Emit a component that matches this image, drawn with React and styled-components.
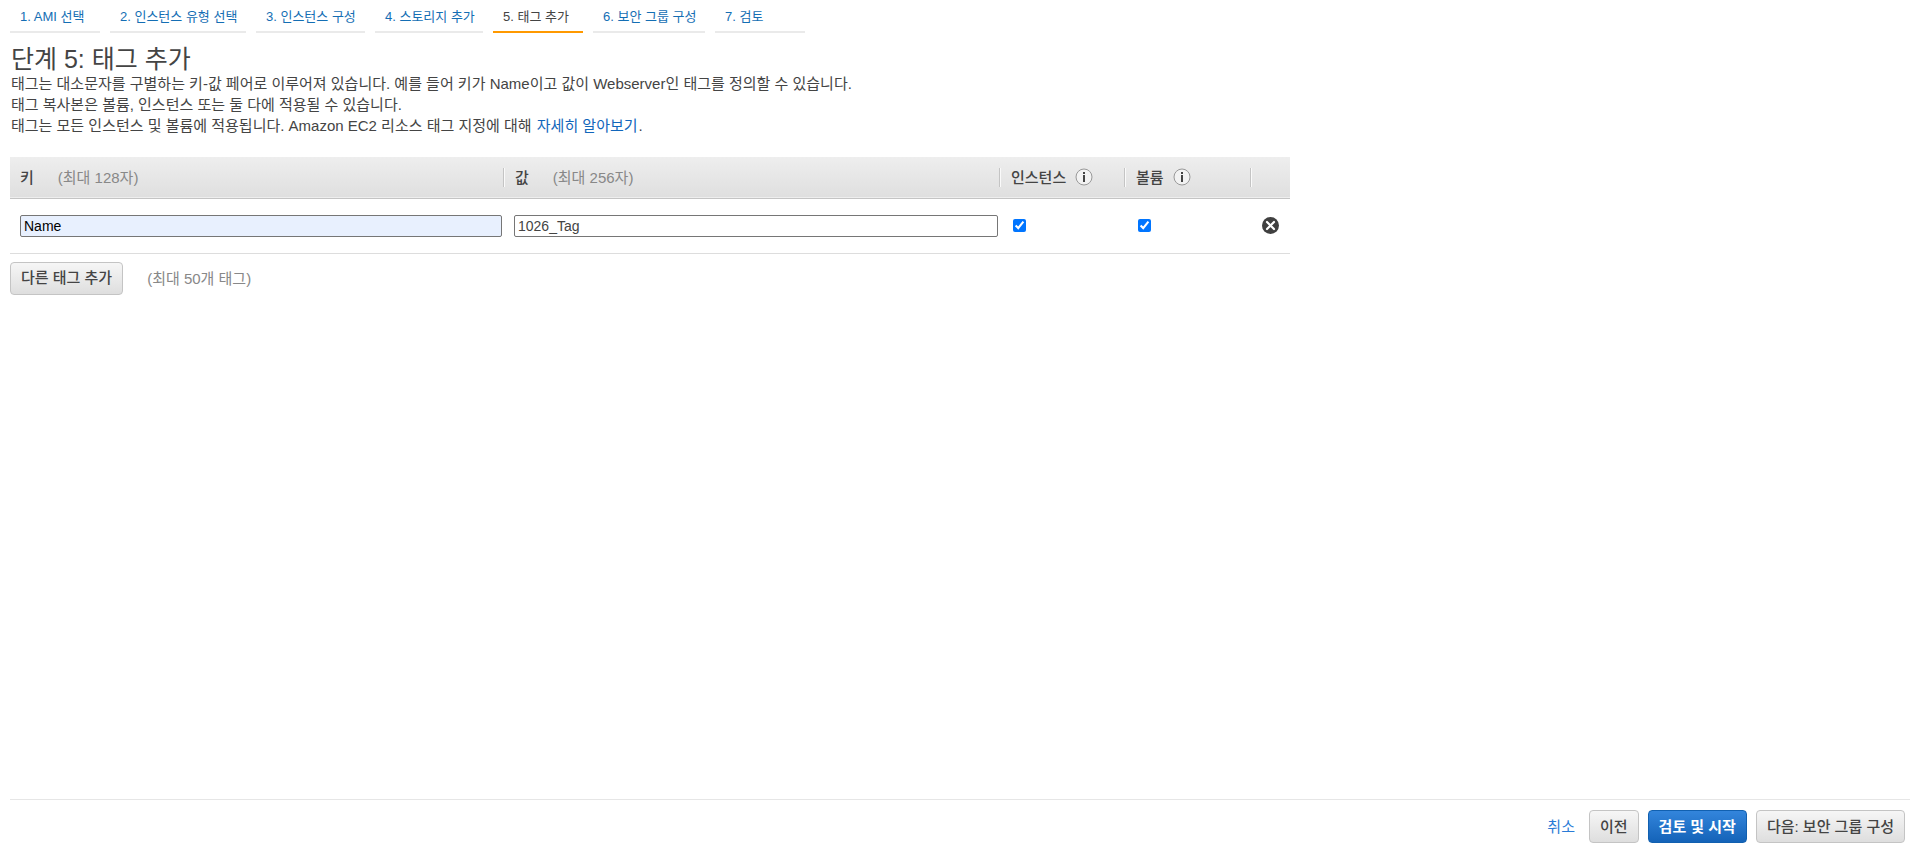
import React, { useState } from "react";
import styled, { createGlobalStyle } from "styled-components";

const GlobalStyle = createGlobalStyle`
  *, *::before, *::after { box-sizing: border-box; }
  body {
    margin: 0;
    background: #fff;
    color: #444;
    font: 15px/21px "Liberation Sans", "Noto Sans CJK KR", sans-serif;
  }
  button, input { font: inherit; color: inherit; }
`;

const Page = styled.div`
  display: flex;
  flex-direction: column;
  min-height: 100vh;
  padding: 0 4px 0 10px;
`;

const Steps = styled.nav`
  display: flex;
  flex-wrap: wrap;
  gap: 10px;
`;

const Step = styled.a`
  min-width: ${(p) => p.$width}px;
  height: 33px;
  padding: 6px 6px 0 10px;
  border-bottom: 2px solid ${(p) => (p.$active ? "#f90" : "#eaeaea")};
  color: ${(p) => (p.$active ? "#444" : "#146eb4")};
  font-size: 13px;
  text-decoration: none;
  white-space: nowrap;
`;

const Main = styled.main`
  flex: 1;
`;

const Title = styled.h1`
  margin: 12px 0 0 1px;
  font-size: 25px;
  line-height: 28px;
  font-weight: 400;
`;

const Description = styled.p`
  margin: 0 0 21px 1px;
`;

const TextLink = styled.a`
  margin: 0 1px;
  color: #1166bb;
  text-decoration: none;
`;

const TagTable = styled.table`
  width: 100%;
  max-width: 1280px;
  table-layout: fixed;
  border-collapse: collapse;
`;

const Column = styled.col`
  width: ${(p) => p.$width};
`;

const HeadRow = styled.tr`
  height: 41px;
  background: linear-gradient(#eee, #dfdfdf);
  border-bottom: 1px solid #c4c4c4;
`;

const HeadCell = styled.th`
  padding: 0;
  text-align: left;
  font-weight: 500;
`;

const HeadContent = styled.div`
  display: flex;
  align-items: center;
  height: 19px;
  padding-left: ${(p) => (p.$divided ? 11 : 10)}px;
  border-left: ${(p) => (p.$divided ? "1px solid #c4c4c4" : "0")};
  box-shadow: ${(p) => (p.$divided ? "inset 1px 0 #fafafa" : "none")};
`;

const Limit = styled.span`
  margin-left: 24px;
  color: #888;
  font-weight: 400;
`;

const InfoButton = styled.button`
  display: flex;
  margin-left: 9px;
  padding: 0;
  border: 0;
  background: none;
`;

const Row = styled.tr`
  height: 55px;
  border-bottom: 1px solid #ddd;
`;

const Cell = styled.td`
  padding: 0 1px 0 ${(p) => (p.$first ? 10 : 11)}px;
  vertical-align: middle;
`;

const TextInput = styled.input`
  display: block;
  width: 100%;
  height: 22px;
  padding: 0 3px;
  border: 1px solid #767676;
  border-radius: 2px;
  background: ${(p) => (p.$filled ? "#e8f0fe" : "#fff")};
  color: ${(p) => (p.$filled ? "#000" : "#444")};
  font-size: 14px;
`;

const Check = styled.input`
  display: block;
  width: 13px;
  height: 13px;
  margin: 0 0 0 3px;
  accent-color: #0075ff;
`;

const RemoveButton = styled.button`
  display: flex;
  margin-left: 1px;
  padding: 0;
  border: 0;
  background: none;
`;

const AddBar = styled.div`
  display: flex;
  align-items: center;
  padding-top: 8px;
`;

const Button = styled.button`
  height: 33px;
  padding: 0 10px;
  border: 1px solid ${(p) => (p.$primary ? "#1160b0" : "#c4c4c4")};
  border-radius: 4px;
  background: ${(p) =>
    p.$primary
      ? "linear-gradient(#3385dc, #1463b8)"
      : "linear-gradient(#f6f6f6, #dedede)"};
  color: ${(p) => (p.$primary ? "#fff" : "#444")};
  font-weight: ${(p) => (p.$primary ? 700 : 500)};
  line-height: 20px;
  white-space: nowrap;
`;

const Footer = styled.footer`
  display: flex;
  align-items: center;
  justify-content: flex-end;
  gap: 9px;
  padding: 10px 5px 4px 0;
  border-top: 1px solid #e6e6e6;
`;

const Cancel = styled.a`
  margin-right: 5px;
  color: #2a7bd6;
  text-decoration: none;
`;

const steps = [
  { label: "1. AMI 선택", width: 90 },
  { label: "2. 인스턴스 유형 선택", width: 136 },
  { label: "3. 인스턴스 구성", width: 109 },
  { label: "4. 스토리지 추가", width: 108 },
  { label: "5. 태그 추가", width: 90, active: true },
  { label: "6. 보안 그룹 구성", width: 112 },
  { label: "7. 검토", width: 90 },
];

function InfoIcon() {
  return (
    <svg width="18" height="18" viewBox="0 0 18 18" aria-hidden="true">
      <circle cx="9" cy="9" r="8" fill="#f2f2f2" stroke="#999" />
      <path d="M8 4h2v2H8zM8 7h2v7H8z" fill="#444" />
    </svg>
  );
}

function RemoveIcon() {
  return (
    <svg width="17" height="17" viewBox="0 0 17 17" aria-hidden="true">
      <circle cx="8.5" cy="8.5" r="8.5" fill="#404040" />
      <path
        d="M5 5l7 7M12 5l-7 7"
        stroke="#fff"
        strokeWidth="2.2"
        strokeLinecap="round"
      />
    </svg>
  );
}

export default function App() {
  const [key, setKey] = useState("Name");
  const [value, setValue] = useState("1026_Tag");

  return (
    <Page>
      <GlobalStyle />
      <Steps>
        {steps.map((s) => (
          <Step
            key={s.label}
            href="#"
            $width={s.width}
            $active={s.active}
            aria-current={s.active ? "step" : undefined}
          >
            {s.label}
          </Step>
        ))}
      </Steps>
      <Main>
        <Title>단계 5: 태그 추가</Title>
        <Description>
          태그는 대소문자를 구별하는 키-값 페어로 이루어져 있습니다. 예를 들어
          키가 Name이고 값이 Webserver인 태그를 정의할 수 있습니다.
          <br />
          태그 복사본은 볼륨, 인스턴스 또는 둘 다에 적용될 수 있습니다.
          <br />
          태그는 모든 인스턴스 및 볼륨에 적용됩니다. Amazon EC2 리소스 태그
          지정에 대해 <TextLink href="#">자세히 알아보기</TextLink>.
        </Description>
        <TagTable>
          <colgroup>
            <Column $width="auto" />
            <Column $width="496px" />
            <Column $width="125px" />
            <Column $width="126px" />
            <Column $width="40px" />
          </colgroup>
          <thead>
            <HeadRow>
              <HeadCell scope="col">
                <HeadContent>
                  키<Limit>(최대 128자)</Limit>
                </HeadContent>
              </HeadCell>
              <HeadCell scope="col">
                <HeadContent $divided>
                  값<Limit>(최대 256자)</Limit>
                </HeadContent>
              </HeadCell>
              <HeadCell scope="col">
                <HeadContent $divided>
                  인스턴스
                  <InfoButton type="button" aria-label="인스턴스 정보">
                    <InfoIcon />
                  </InfoButton>
                </HeadContent>
              </HeadCell>
              <HeadCell scope="col">
                <HeadContent $divided>
                  볼륨
                  <InfoButton type="button" aria-label="볼륨 정보">
                    <InfoIcon />
                  </InfoButton>
                </HeadContent>
              </HeadCell>
              <HeadCell scope="col" aria-label="삭제">
                <HeadContent $divided />
              </HeadCell>
            </HeadRow>
          </thead>
          <tbody>
            <Row>
              <Cell $first>
                <TextInput
                  aria-label="키"
                  $filled
                  value={key}
                  onChange={(e) => setKey(e.target.value)}
                />
              </Cell>
              <Cell>
                <TextInput
                  aria-label="값"
                  value={value}
                  onChange={(e) => setValue(e.target.value)}
                />
              </Cell>
              <Cell>
                <Check type="checkbox" aria-label="인스턴스" defaultChecked />
              </Cell>
              <Cell>
                <Check type="checkbox" aria-label="볼륨" defaultChecked />
              </Cell>
              <Cell>
                <RemoveButton type="button" aria-label="태그 삭제">
                  <RemoveIcon />
                </RemoveButton>
              </Cell>
            </Row>
          </tbody>
        </TagTable>
        <AddBar>
          <Button type="button">다른 태그 추가</Button>
          <Limit>(최대 50개 태그)</Limit>
        </AddBar>
      </Main>
      <Footer>
        <Cancel href="#">취소</Cancel>
        <Button type="button">이전</Button>
        <Button type="button" $primary>
          검토 및 시작
        </Button>
        <Button type="button">다음: 보안 그룹 구성</Button>
      </Footer>
    </Page>
  );
}
